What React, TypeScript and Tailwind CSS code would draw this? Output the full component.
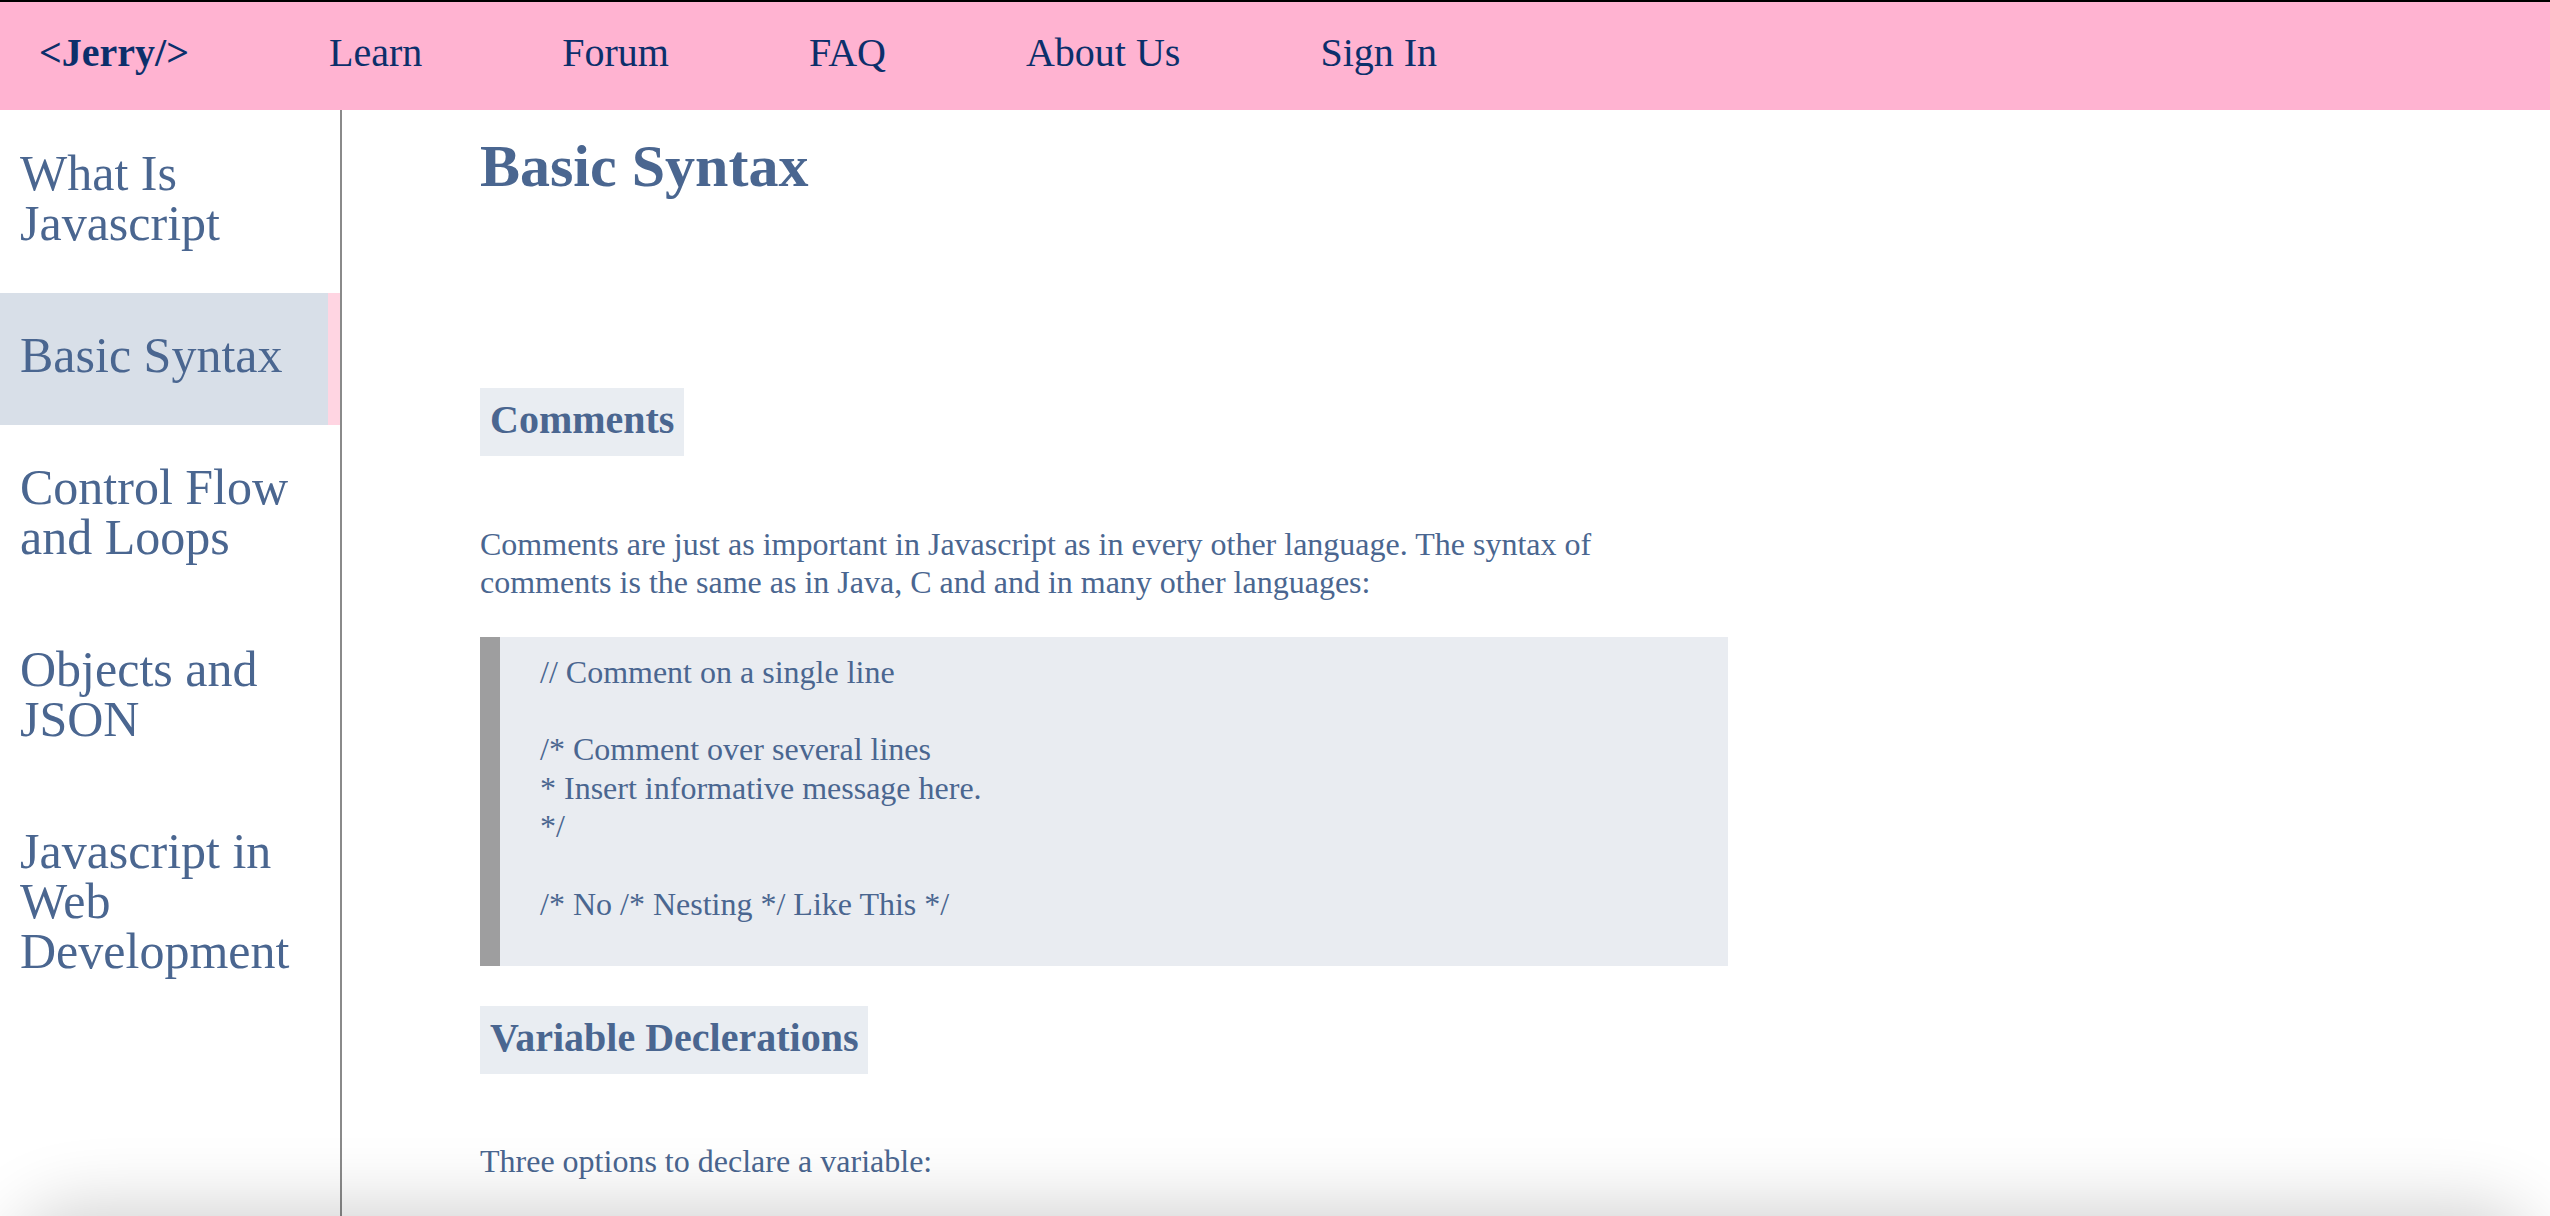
import React from "react";

const navItems = ["Learn", "Forum", "FAQ", "About Us", "Sign In"];

const sideItems = [
  { label: "What Is Javascript", active: false },
  { label: "Basic Syntax", active: true },
  { label: "Control Flow and Loops", active: false },
  { label: "Objects and JSON", active: false },
  { label: "Javascript in Web Development", active: false },
];

const code = `// Comment on a single line

/* Comment over several lines
* Insert informative message here.
*/

/* No /* Nesting */ Like This */`;

export default function App() {
  return (
    <div className="relative h-[1216px] w-full overflow-hidden bg-white font-['Liberation_Serif','Times_New_Roman',serif]">
      <header className="flex h-[110px] items-start gap-[140px] border-t-2 border-black bg-[#ffb3d1] pl-[39px] pt-[28px] text-[40px] leading-[46px] text-[#0c2f6b]">
        <span className="font-bold">&lt;Jerry/&gt;</span>
        {navItems.map((n) => (
          <a key={n} className="cursor-pointer">
            {n}
          </a>
        ))}
      </header>

      <div className="flex h-[1106px]">
        <nav className="w-[342px] shrink-0 border-r-2 border-[#8a8a8a] pt-[1px]">
          {sideItems.map((it) => (
            <div
              key={it.label}
              className={
                it.active
                  ? "border-r-[12px] border-[#ffd5e2] bg-[#d8dfe8] pb-[45px] pl-[20px] pr-[8px] pt-[37px] text-[50px] leading-[50px] text-[#4a6690]"
                  : "pb-[45px] pl-[20px] pr-[20px] pt-[37px] text-[50px] leading-[50px] text-[#4a6690]"
              }
            >
              {it.label}
            </div>
          ))}
        </nav>

        <main className="flex-1 pl-[138px] text-[#4a6690]">
          <div className="w-[1248px]">
            <h1 className="mt-[22px] text-[60px] font-bold leading-[69px]">Basic Syntax</h1>
            <h2 className="mt-[187px] w-fit bg-[#e9edf2] px-[10px] pb-[13px] pt-[9px] text-[40px] font-bold leading-[46px]">
              Comments
            </h2>
            <p className="mt-[69px] text-[32px] leading-[38px]">
              Comments are just as important in Javascript as in every other language. The syntax of comments is the
              same as in Java, C and and in many other languages:
            </p>
            <div className="mt-[36px] whitespace-pre border-l-[20px] border-[#9e9e9f] bg-[#e9ecf1] pb-[43px] pl-[40px] pt-[16px] text-[32px] leading-[38.6px]">
              {code}
            </div>
            <h2 className="mt-[40px] w-fit bg-[#e9edf2] px-[10px] pb-[13px] pt-[9px] text-[40px] font-bold leading-[46px]">
              Variable Declerations
            </h2>
            <p className="mt-[68px] text-[32px] leading-[38px]">Three options to declare a variable:</p>
          </div>
        </main>
      </div>

      <div className="pointer-events-none absolute left-[20px] right-[20px] top-[1216px] h-[200px] rounded-[60px] shadow-[0_0_70px_10px_rgba(0,0,0,0.18)]" />
    </div>
  );
}
